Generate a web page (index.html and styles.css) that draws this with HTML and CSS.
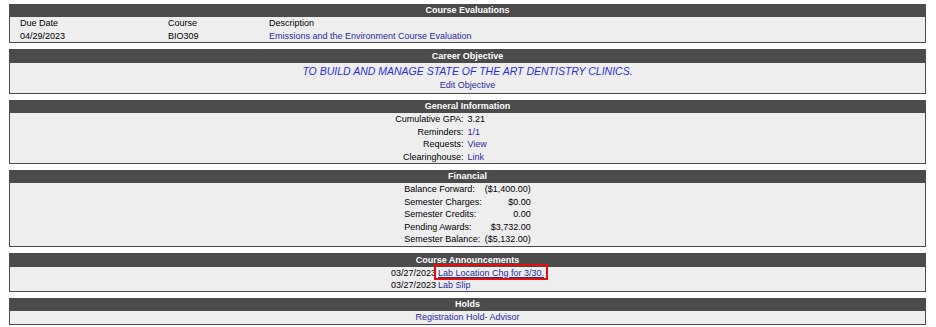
FILE: index.html
```html
<!DOCTYPE html>
<html lang="en">
  <head>
    <meta charset="UTF-8" />
    <meta name="viewport" content="width=device-width, initial-scale=1.0" />
    <title>Student Home</title>
    <link rel="stylesheet" href="styles.css">
  </head>
  <body>
    <div class="page">

      <!-- Course Evaluations -->
      <div class="panel">
        <div class="panel-title">Course Evaluations</div>
        <div class="panel-body evals">
          <span>Due Date</span>
          <span>Course</span>
          <span>Description</span>
          <span>04/29/2023</span>
          <span>BIO309</span>
          <a href="#">Emissions and the Environment Course Evaluation</a>
        </div>
      </div>

      <!-- Career Objective -->
      <div class="panel">
        <div class="panel-title tall">Career Objective</div>
        <div class="panel-body objective">
          <div class="objective-text">TO BUILD AND MANAGE STATE OF THE ART DENTISTRY CLINICS.</div>
          <a href="#">Edit Objective</a>
        </div>
      </div>

      <!-- General Information -->
      <div class="panel">
        <div class="panel-title">General Information</div>
        <div class="panel-body info">
          <span class="label">Cumulative GPA:</span><span>3.21</span>
          <span class="label">Reminders:</span><a href="#">1/1</a>
          <span class="label">Requests:</span><a href="#">View</a>
          <span class="label">Clearinghouse:</span><a href="#">Link</a>
        </div>
      </div>

      <!-- Financial -->
      <div class="panel">
        <div class="panel-title">Financial</div>
        <div class="panel-body centered">
          <div class="money">
            <span>Balance Forward:</span><span class="amount">($1,400.00)</span>
            <span>Semester Charges:</span><span class="amount">$0.00</span>
            <span>Semester Credits:</span><span class="amount">0.00</span>
            <span>Pending Awards:</span><span class="amount">$3,732.00</span>
            <span>Semester Balance:</span><span class="amount">($5,132.00)</span>
          </div>
        </div>
      </div>

      <!-- Course Announcements -->
      <div class="panel">
        <div class="panel-title tall">Course Announcements</div>
        <div class="panel-body centered">
          <div class="news">
            <span>03/27/2023</span><a href="#" class="marked"><u>Lab Location Chg for 3/30.</u></a>
            <span>03/27/2023</span><a href="#">Lab Slip</a>
          </div>
        </div>
      </div>

      <!-- Holds -->
      <div class="panel">
        <div class="panel-title">Holds</div>
        <div class="panel-body holds">
          <a href="#">Registration Hold- Advisor</a>
        </div>
      </div>

    </div>
  </body>
</html>
```

FILE: styles.css
```css
body {
  margin: 0;
  background-color: #fff;
  font-family: "Liberation Sans", Arial, sans-serif;
  font-size: 9px;
  color: #000;
}
a {
  color: #2a2aa8;
  text-decoration: none;
}
.page {
  padding: 4px 10px 0 9px;
}
.panel {
  margin-bottom: 6px;
  background-color: #eeeeee;
  border: 1px solid #4b4b4b;
  border-top: none;
}
.panel-title {
  height: 13px;
  line-height: 13px;
  background-color: #4b4b4b;
  color: #fff;
  font-weight: bold;
  text-align: center;
}
.panel-title.tall {
  height: 14px;
  line-height: 14px;
}
.panel-body {
  line-height: 12.5px;
}
.evals {
  display: grid;
  grid-template-columns: 148px 101px 1fr;
  padding-left: 10px;
}
.objective {
  text-align: center;
  padding-bottom: 1px;
}
.objective-text {
  font-size: 10.5px;
  font-style: italic;
  color: #2b2bf0;
  line-height: 16px;
}
.objective a {
  line-height: 13px;
}
.info {
  display: grid;
  grid-template-columns: 1fr 1fr;
  column-gap: 4px;
  padding-right: 4px;
}
.info .label {
  text-align: right;
}
.centered {
  text-align: center;
}
.money {
  display: inline-grid;
  grid-template-columns: auto auto;
  column-gap: 3px;
  text-align: left;
}
.money .amount {
  text-align: right;
}
.news {
  display: inline-grid;
  grid-template-columns: auto auto;
  column-gap: 2px;
  text-align: left;
  line-height: 12px;
}
.marked {
  position: relative;
}
.marked::after {
  content: "";
  position: absolute;
  top: -3px;
  bottom: -1px;
  left: -4px;
  right: -4px;
  border: 2px solid #e41010;
}
.holds {
  text-align: center;
  line-height: 13px;
}
```
